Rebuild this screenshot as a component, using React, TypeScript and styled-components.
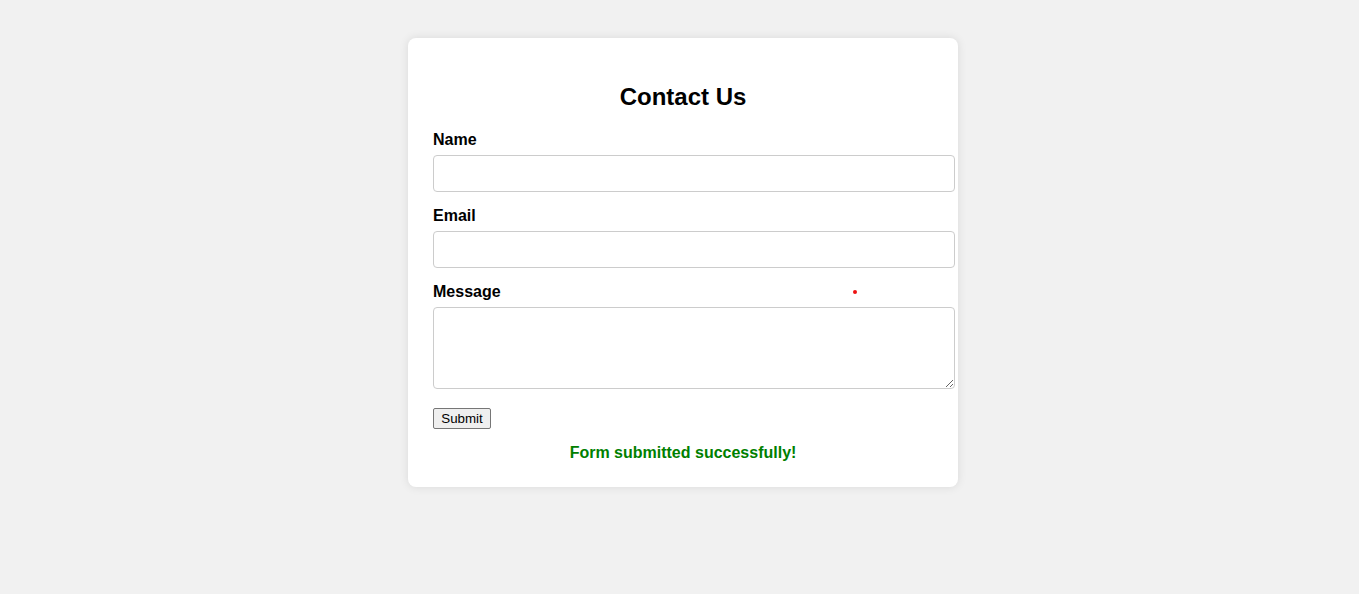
import React from "react";
import styled, { createGlobalStyle } from "styled-components";

const GlobalStyle = createGlobalStyle`
  html, body {
    margin: 0;
    padding: 0;
    background: #f1f1f1;
    font-family: "Liberation Sans", Arial, sans-serif;
  }
  * { box-sizing: content-box; }
`;

const Page = styled.div`
  display: flex;
  justify-content: center;
  padding: 38px 0 0 7px;
  min-height: 556px;
`;

const Card = styled.div`
  position: relative;
  width: 500px;
  padding: 25px;
  background: #ffffff;
  border-radius: 8px;
  box-shadow: 0 0 10px rgba(0, 0, 0, 0.1);
  align-self: flex-start;
`;

const Title = styled.h2`
  margin: 20px 0 20px;
  text-align: center;
  font-size: 24px;
  font-weight: bold;
  color: #000;
`;

const Label = styled.label`
  display: block;
  font-size: 16px;
  font-weight: bold;
  color: #000;
  margin-bottom: 6px;
`;

const Input = styled.input`
  display: block;
  width: 100%;
  padding: 10px;
  margin: 0 0 15px;
  border: 1px solid #ccc;
  border-radius: 4px;
  font-family: "Liberation Sans", Arial, sans-serif;
  font-size: 13.33px;
  line-height: 15px;
  height: 15px;
  outline: none;
`;

const TextArea = styled.textarea`
  width: 100%;
  padding: 10px;
  margin: 0 0 19px;
  border: 1px solid #ccc;
  border-radius: 4px;
  font-family: "Liberation Mono", monospace;
  font-size: 13.33px;
  height: 60px;
  display: block;
  outline: none;
`;

const Button = styled.button`
  display: block;
  box-sizing: border-box;
  font-family: "Liberation Sans", Arial, sans-serif;
  font-size: 13.33px;
  padding: 1px 6px;
  height: 21px;
  width: 58px;
  color: #000;
  background: #efefef;
  border: 1px solid #767676;
  border-radius: 2px;
  margin: 0;
`;

const Success = styled.p`
  margin: 15px 0 0;
  text-align: center;
  color: green;
  font-weight: bold;
  font-size: 16px;
`;

const Dot = styled.span`
  position: absolute;
  left: 445px;
  top: 252px;
  width: 4px;
  height: 4px;
  border-radius: 50%;
  background: #ee1111;
`;

export default function App() {
  return (
    <>
      <GlobalStyle />
      <Page>
        <Card>
          <Title>Contact Us</Title>
          <Label htmlFor="name">Name</Label>
          <Input id="name" type="text" />
          <Label htmlFor="email">Email</Label>
          <Input id="email" type="email" />
          <Label htmlFor="message">Message</Label>
          <TextArea id="message" />
          <Button type="submit">Submit</Button>
          <Success>Form submitted successfully!</Success>
          <Dot />
        </Card>
      </Page>
    </>
  );
}
